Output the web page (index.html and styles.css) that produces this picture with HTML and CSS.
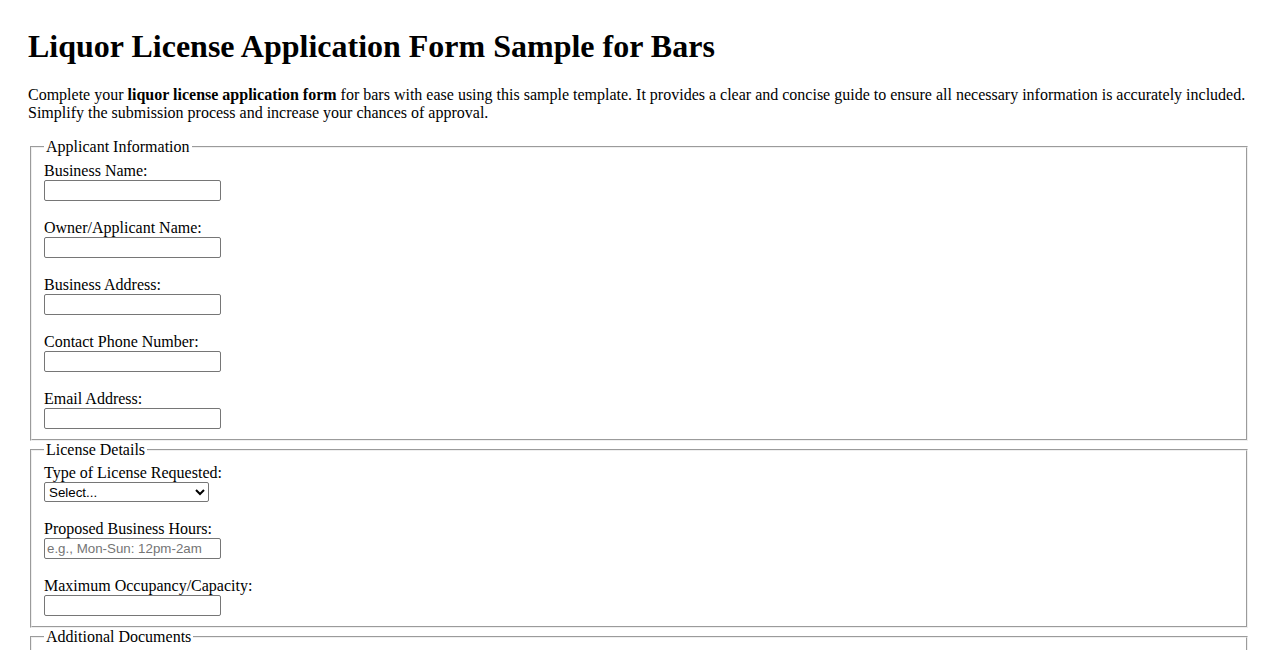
FILE: index.html
```html
<!DOCTYPE html>
<html lang="en">
<head>
<meta charset="utf-8">
<title>Liquor License Application Form Sample for Bars</title>
<link rel="stylesheet" href="styles.css">
</head>
<body>
<h1>Liquor License Application Form Sample for Bars</h1>
<p>Complete your <strong>liquor license application form</strong> for bars with ease using this sample template. It provides a clear and concise guide to ensure all necessary information is accurately included. Simplify the submission process and increase your chances of approval.</p>
<form>
<fieldset>
<legend>Applicant Information</legend>
<label for="bname">Business Name:</label><br>
<input type="text" id="bname" class="field"><br><br>
<label for="oname">Owner/Applicant Name:</label><br>
<input type="text" id="oname" class="field"><br><br>
<label for="baddr">Business Address:</label><br>
<input type="text" id="baddr" class="field"><br><br>
<label for="phone">Contact Phone Number:</label><br>
<input type="tel" id="phone" class="field"><br><br>
<label for="email">Email Address:</label><br>
<input type="email" id="email" class="field">
</fieldset>
<fieldset>
<legend>License Details</legend>
<label for="ltype">Type of License Requested:</label><br>
<select id="ltype" class="choice">
<option>Select...</option>
<option>Full Liquor License</option>
<option>Beer and Wine License</option>
</select><br><br>
<label for="hours">Proposed Business Hours:</label><br>
<input type="text" id="hours" class="field" placeholder="e.g., Mon-Sun: 12pm-2am"><br><br>
<label for="cap">Maximum Occupancy/Capacity:</label><br>
<input type="text" inputmode="numeric" id="cap" class="field">
</fieldset>
<fieldset>
<legend>Additional Documents</legend>
<label for="docs">Upload Floor Plan:</label><br>
<input type="file" id="docs"><br><br>
<label for="lease">Upload Lease Agreement:</label><br>
<input type="file" id="lease">
</fieldset>
</form>
</body>
</html>
```
FILE: styles.css
```css
body {
  margin: 28px;
  font-family: "Liberation Serif", "Times New Roman", serif;
  font-size: 16px;
  color: #000;
  background: #fff;
}

h1 {
  font-size: 32px;
  margin: 0 0 21px;
}

.field {
  box-sizing: border-box;
  width: 177px;
  height: 21px;
  font-family: "Liberation Sans", Arial, sans-serif;
  font-size: 13.33px;
  padding: 1px 2px;
  border: 1px solid #767676;
  border-radius: 2px;
}

.field::placeholder {
  color: #757575;
}

.choice {
  box-sizing: border-box;
  width: 165px;
  height: 20px;
  font-family: "Liberation Sans", Arial, sans-serif;
  font-size: 13.33px;
  color: #000;
  border: 1px solid #767676;
  border-radius: 2px;
  background: #fff;
}
```
